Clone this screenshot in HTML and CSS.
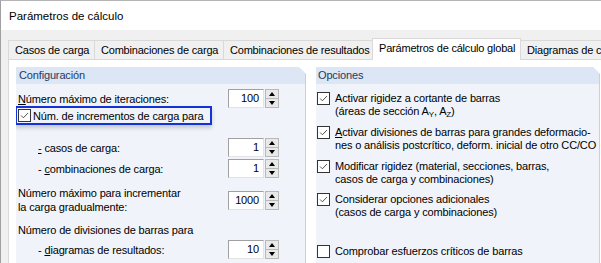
FILE: index.html
```html
<!DOCTYPE html>
<html>
<head>
<meta charset="utf-8">
<link rel="stylesheet" href="styles.css">
</head>
<body>
<div class="window">
  <div class="titlebar">Parámetros de cálculo</div>
  <div class="client">
    <div class="tabs">
      <div class="tab t1">Casos de carga</div>
      <div class="tab t2">Combinaciones de carga</div>
      <div class="tab t3">Combinaciones de resultados</div>
      <div class="tab active t4">Parámetros de cálculo global</div>
      <div class="tab t5">Diagramas de c</div>
    </div>
    <div class="page">
      <div class="panel left">
        <div class="phead">Configuración</div>
        <div class="pbody">
          <div class="row r1">
            <div class="label"><u>N</u>úmero máximo de iteraciones:</div>
            <div class="spin"><div class="val">100</div><div class="btns"><div class="b up"></div><div class="b dn"></div></div></div>
          </div>
          <div class="row r2">
            <div class="focus">
              <span class="cb checked"><svg viewBox="0 0 13 13"><path d="M2.5 6.5 L5.2 9.2 L10.6 3.6" /></svg></span>
              <span class="cbtext">Núm. de incrementos de carga para</span>
            </div>
          </div>
          <div class="row r3">
            <div class="label sub"><u>-</u> casos de carga:</div>
            <div class="spin"><div class="val">1</div><div class="btns"><div class="b up"></div><div class="b dn"></div></div></div>
          </div>
          <div class="row r4">
            <div class="label sub">- <u>c</u>ombinaciones de carga:</div>
            <div class="spin"><div class="val">1</div><div class="btns"><div class="b up"></div><div class="b dn"></div></div></div>
          </div>
          <div class="row r5">
            <div class="label">Número máximo para incrementar<br>la carga gradualmente:</div>
            <div class="spin"><div class="val">1000</div><div class="btns"><div class="b up"></div><div class="b dn"></div></div></div>
          </div>
          <div class="row r6">
            <div class="label">Número de divisiones de barras para</div>
          </div>
          <div class="row r7">
            <div class="label sub">- <u>d</u>iagramas de resultados:</div>
            <div class="spin"><div class="val">10</div><div class="btns"><div class="b up"></div><div class="b dn"></div></div></div>
          </div>
        </div>
      </div>
      <div class="panel right">
        <div class="phead">Opciones</div>
        <div class="pbody">
          <div class="opt o1">
            <span class="cb checked"><svg viewBox="0 0 13 13"><path d="M2.5 6.5 L5.2 9.2 L10.6 3.6" /></svg></span>
            <span class="otext">Activar rigidez a cortante de barras<br>(áreas de sección A<sub>Y</sub>, A<sub>Z</sub>)</span>
          </div>
          <div class="opt o2">
            <span class="cb checked"><svg viewBox="0 0 13 13"><path d="M2.5 6.5 L5.2 9.2 L10.6 3.6" /></svg></span>
            <span class="otext"><u>A</u>ctivar divisiones de barras para grandes deformacio-<br>nes o análisis postcrítico, deform. inicial de otro CC/CO</span>
          </div>
          <div class="opt o3">
            <span class="cb checked"><svg viewBox="0 0 13 13"><path d="M2.5 6.5 L5.2 9.2 L10.6 3.6" /></svg></span>
            <span class="otext">Modificar rigidez (material, secciones, barras,<br>casos de carga y combinaciones)</span>
          </div>
          <div class="opt o4">
            <span class="cb checked"><svg viewBox="0 0 13 13"><path d="M2.5 6.5 L5.2 9.2 L10.6 3.6" /></svg></span>
            <span class="otext">Considerar opciones adicionales<br>(casos de carga y combinaciones)</span>
          </div>
          <div class="opt o5">
            <span class="cb"></span>
            <span class="otext">Comprobar esfuerzos críticos de barras</span>
          </div>
        </div>
      </div>
    </div>
  </div>
</div>
</body>
</html>
```

FILE: styles.css
```css
* { box-sizing: border-box; }
html, body { margin: 0; padding: 0; }
body {
  width: 601px;
  height: 263px;
  overflow: hidden;
  background: #f0f0f0;
  font-family: "Liberation Sans", Arial, sans-serif;
  font-size: 11px;
  letter-spacing: -0.15px;
  color: #000;
}
.window {
  width: 601px;
  height: 263px;
  border-left: 1px solid #a0a0a0;
  border-top: 1px solid #b4b4b4;
  display: flex;
  flex-direction: column;
}
.titlebar {
  height: 29px;
  background: #fff;
  padding-left: 8px;
  padding-top: 7px;
  font-size: 11.5px;
  letter-spacing: 0;
  line-height: 16px;
}
.client {
  flex: 1;
  display: flex;
  flex-direction: column;
  padding-left: 7px;
  padding-top: 8px;
}
.tabs {
  display: flex;
  align-items: flex-end;
  height: 21px;
  font-size: 11px;
  letter-spacing: -0.2px;
}
.tab {
  height: 19px;
  line-height: 18px;
  border: 1px solid #d9d9d9;
  border-bottom: none;
  border-right: none;
  background: #f0f0f0;
  padding: 0 0 0 6px;
  white-space: nowrap;
  overflow: hidden;
}
.t1 { width: 86px; }
.t2 { width: 129px; }
.t3 { width: 149px; }
.t4 { width: 149px; }
.t5 { flex: 1; }
.tab.active {
  height: 22px;
  background: #fff;
  line-height: 19px;
  border-right: 1px solid #d9d9d9;
  position: relative;
  margin-bottom: -1px;
  z-index: 1;
}
.tab.active + .tab { border-left: none; }
.page {
  flex: 1;
  background: #fff;
  border-left: 1px solid #d9d9d9;
  border-top: 1px solid #d9d9d9;
  display: flex;
  gap: 10px;
  padding: 7px 0 0 7px;
}
.panel {
  background: #f0f4fa;
  clip-path: polygon(0 0, calc(100% - 7px) 0, 100% 7px, 100% 100%, 0 100%);
  border-right: 1px solid #c3d0ea;
  display: flex;
  flex-direction: column;
}
.panel.left { width: 290px; }
.panel.right { width: 284px; }
.phead {
  height: 17px;
  background: #dce6f4;
  color: #1f3a5f;
  line-height: 17px;
  padding-left: 3px;
}
.right .phead { padding-left: 2px; }
.pbody {
  display: flex;
  flex-direction: column;
}
.row {
  display: flex;
  align-items: center;
  padding-left: 2px;
  padding-right: 26px;
}
.label { flex: 1; line-height: 14px; white-space: nowrap; }
.label.sub { padding-left: 20px; }
.r1 { margin-top: 5px; }
.r2 { margin-top: -2px; padding-left: 0; }
.r3 { margin-top: 13px; }
.r4 { margin-top: 2px; }
.r5 { margin-top: 8px; }
.r6 { margin-top: 9px; }
.r7 { margin-top: 3px; }
.spin {
  width: 51px;
  height: 19px;
  display: flex;
}
.val {
  width: 36px;
  height: 19px;
  background: #fff;
  border: 1px solid #a0a0a0;
  border-right-color: #e3e3e3;
  border-bottom-color: #e3e3e3;
  text-align: right;
  padding-right: 4px;
  line-height: 17px;
}
.btns {
  width: 14px;
  margin-left: 1px;
  display: flex;
  flex-direction: column;
  border: 1px solid #b8b8b8;
  background: #e9e9e9;
}
.b {
  flex: 1;
  position: relative;
}
.b.up { border-bottom: 1px solid #b8b8b8; }
.b::after {
  content: "";
  position: absolute;
  left: 3px;
  top: 2px;
  border-left: 3.5px solid transparent;
  border-right: 3.5px solid transparent;
}
.b.up::after { border-bottom: 4px solid #000; }
.b.dn::after { border-top: 4px solid #000; top: 2px; }
.focus {
  display: flex;
  align-items: center;
  height: 19px;
  width: 197px;
  margin-left: -1px;
  border: 2px solid #1433d6;
  padding-left: 1px;
  box-shadow: 0 3px 4px rgba(0, 0, 0, 0.18);
}
.cb {
  width: 13px;
  height: 13px;
  flex: none;
  background: #fff;
  border: 1px solid #333;
  display: inline-block;
}
.cb svg { display: block; width: 11px; height: 11px; margin: 0; }
.cb svg path { fill: none; stroke: #444; stroke-width: 1.1; }
.cbtext { margin-left: 2px; line-height: 14px; white-space: nowrap; }
.opt {
  display: flex;
  align-items: flex-start;
  padding-left: 1px;
}
.otext {
  margin-left: 5px;
  line-height: 13px;
  margin-top: 0;
  white-space: nowrap;
}
.o1 { margin-top: 8px; }
.o2 { margin-top: 8px; }
.o3 { margin-top: 8px; }
.o4 { margin-top: 7px; }
.o5 { margin-top: 26px; }
sub { font-size: 8px; vertical-align: -2px; line-height: 0; }
```
